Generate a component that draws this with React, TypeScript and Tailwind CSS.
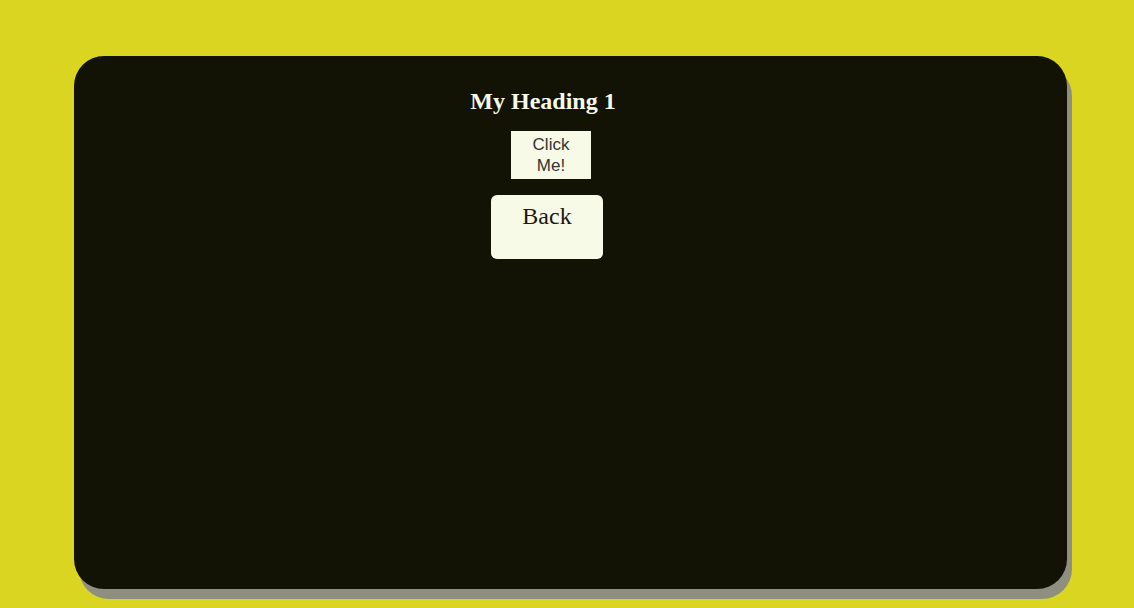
export default function App() {
  return (
    <div className="flex min-h-[608px] w-full justify-center bg-[#dad521] pt-[56px] pl-[7px]">
      <div className="flex h-[533px] w-[993px] flex-col items-center rounded-[30px] bg-[#121205] pt-[31px] pr-[47px] shadow-[5px_10px_0_0_#8f8f80]">
        <h2 className="mr-[8px] whitespace-nowrap font-['Liberation_Serif',serif] text-[24px] font-bold leading-[28px] text-[#f8fae8]">
          My Heading 1
        </h2>
        <button className="mt-[16px] ml-[8px] h-[48px] w-[80px] bg-[#f8fae8] px-[10px] font-['Liberation_Sans',Arial,sans-serif] text-[17px] leading-[21px] text-[#333333]">
          Click Me!
        </button>
        <button className="mt-[16px] flex h-[64px] w-[112px] items-start justify-center rounded-[6px] bg-[#f8fae8] pt-[6px] font-['Liberation_Serif',serif] text-[24px] leading-[30px] text-[#1a1a10]">
          Back
        </button>
      </div>
    </div>
  )
}
